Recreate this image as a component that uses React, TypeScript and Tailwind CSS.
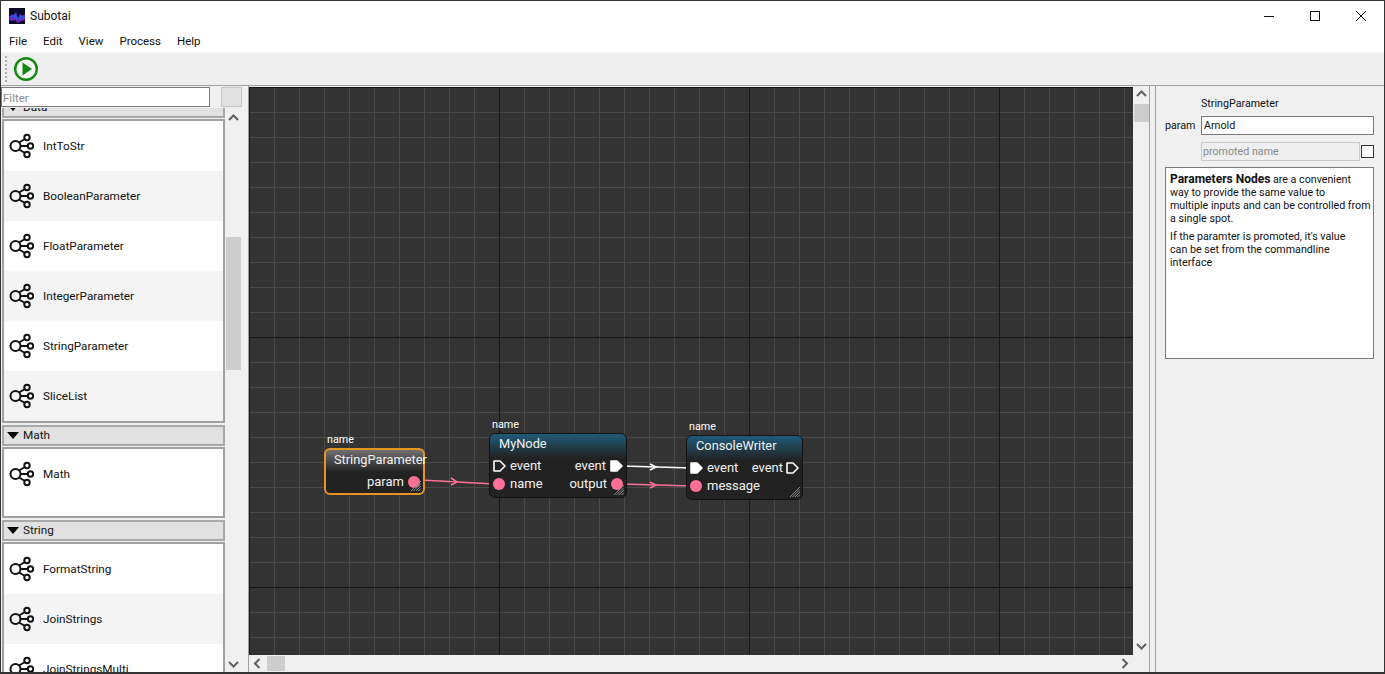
import React from "react";

/* node palette */
const dataRows = ["IntToStr", "BooleanParameter", "FloatParameter", "IntegerParameter", "StringParameter", "SliceList"];
const mathRows = ["Math"];
const stringRows = ["FormatString", "JoinStrings", "JoinStringsMulti"];

const NodeIcon = () => (
  <svg width="28" height="28" viewBox="0 0 28 28" fill="none" stroke="#111" strokeWidth="2" className="shrink-0">
    <circle cx="9.5" cy="14" r="5" />
    <circle cx="21" cy="5.5" r="2.7" />
    <circle cx="24.5" cy="14" r="2.7" />
    <circle cx="21" cy="22.5" r="2.7" />
    <path d="M13 10.5 L19 7 M14.5 14 H21.8 M13 17.5 L19 21" />
  </svg>
);

const Row = ({ label, shaded }: { label: string; shaded: boolean }) => (
  <div className={`flex h-[50px] shrink-0 items-center gap-[9px] pl-[2px] ${shaded ? "bg-[#f4f4f4]" : "bg-white"}`}>
    <NodeIcon />
    <span className="pt-[1px] text-[11.75px] text-[#111]">{label}</span>
  </div>
);

const Section = ({ title, rows, className }: { title: string; rows: string[]; className: string }) => (
  <div className="flex flex-col">
    <div className="flex h-[21px] items-center gap-[4px] border-2 border-[#a8a8a8] bg-[#e1e1e1] pl-[3px]">
      <span className="h-0 w-0 border-x-[6px] border-t-[7px] border-x-transparent border-t-black" />
      <span className="pt-[1px] text-[11.75px] text-[#111]">{title}</span>
    </div>
    <div className={`mt-[1px] flex flex-col overflow-hidden border-2 border-[#a0a0a0] bg-white ${className}`}>
      {rows.map((r, i) => (
        <Row key={r} label={r} shaded={i % 2 === 1} />
      ))}
    </div>
  </div>
);

/* node graph */
type PortKind = "event" | "value";

const PortMark = ({ kind, filled }: { kind: PortKind; filled?: boolean }) =>
  kind === "value" ? (
    <span className="h-[12px] w-[12px] shrink-0 rounded-full bg-[#ff7096]" />
  ) : (
    <svg width="13" height="12" viewBox="0 0 13 12" className="shrink-0">
      <path
        d="M1 1 H7 L12 6 L7 11 H1 Z"
        fill={filled ? "#fff" : "none"}
        stroke="#fff"
        strokeWidth="1.6"
        strokeLinejoin="round"
      />
    </svg>
  );

const Grip = () => (
  <svg width="10" height="10" viewBox="0 0 10 10" className="absolute bottom-[2px] right-[2px]" stroke="#8a8a8a" strokeWidth="1">
    <path d="M0 10 L10 0 M2.5 10 L10 2.5 M5 10 L10 5 M7.5 10 L10 7.5" />
  </svg>
);

const GraphNode = ({
  title,
  pos,
  header,
  titleClass,
  children
}: {
  title: string;
  pos: string;
  header: string;
  titleClass: string;
  children: React.ReactNode;
}) => (
  <div className={`absolute ${pos}`}>
    <span className="absolute -top-[15px] left-[3px] text-[10.75px] leading-[14px] text-white">name</span>
    <div className={`relative h-full rounded-[6px] text-[13px] leading-[18px] text-[#f2f2f2] ${header}`}>
      <div className={`whitespace-nowrap text-[12.8px] leading-[20px] ${titleClass}`}>{title}</div>
      {children}
      <Grip />
    </div>
  </div>
);

const Wires = () => (
  <svg width="884" height="568" className="absolute left-0 top-0" fill="none" strokeWidth="1.6">
    <g stroke="#ff7096">
      <path d="M172 393 L245 397" />
      <path d="M202 391 L208 395 L202 398" />
      <path d="M373 397 L443 399" />
      <path d="M401 395 L407 398 L401 401" />
    </g>
    <g stroke="#fff">
      <path d="M373 379 L443 381" />
      <path d="M401 377 L407 380 L401 383" />
    </g>
  </svg>
);

const ScrollArrow = ({ dir }: { dir: "up" | "down" | "left" | "right" }) => {
  const d = { up: "M1 7 L5.5 2.5 L10 7", down: "M1 3 L5.5 7.5 L10 3", left: "M7.5 1 L3 5.5 L7.5 10", right: "M3.5 1 L8 5.5 L3.5 10" }[dir];
  return (
    <svg width="11" height="11" viewBox="0 0 11 11" fill="none" stroke="#606060" strokeWidth="2">
      <path d={d} />
    </svg>
  );
};

const App = () => {
  return (
    <div className="flex h-[674px] w-[1385px] flex-col overflow-hidden border-x border-y-2 border-x-[#333] border-y-[#333] border-t-[1px] bg-[#f0f0f0] font-['Roboto',sans-serif] text-[12px] text-[#111]">
      {/* title bar */}
      <div className="flex h-[29px] shrink-0 items-center bg-white">
        <svg width="16" height="16" viewBox="0 0 16 16" className="ml-[8px] mr-[5px]">
          <rect width="16" height="16" fill="#0b0b2a" />
          <path d="M0 9 L3 6 L5 10 L7 3 L9 13 L11 5 L13 9 L16 6 L16 12 L12 13 L9 15 L6 12 L3 13 L0 12 Z" fill="#7a1fc0" />
          <path d="M0 9 L4 7 L7 5 L9 10 L12 7 L16 8 L16 10 L11 11 L8 12 L5 10 Z" fill="#2f4fe0" />
        </svg>
        <span>Subotai</span>
        <div className="ml-auto flex h-full">
          <div className="flex w-[46px] items-center justify-center">
            <svg width="10" height="10" stroke="#111" strokeWidth="1"><path d="M0 5.5 H10" /></svg>
          </div>
          <div className="flex w-[46px] items-center justify-center">
            <svg width="10" height="10" fill="none" stroke="#111" strokeWidth="1"><rect x="0.5" y="0.5" width="9" height="9" /></svg>
          </div>
          <div className="flex w-[46px] items-center justify-center">
            <svg width="10" height="10" stroke="#111" strokeWidth="1"><path d="M0 0 L10 10 M10 0 L0 10" /></svg>
          </div>
        </div>
      </div>
      {/* menu */}
      <div className="flex h-[23px] shrink-0 items-center gap-[16px] border-b border-[#f5f5f5] bg-white pl-[8px] pt-[2px] text-[11.5px]">
        <span>File</span>
        <span>Edit</span>
        <span>View</span>
        <span>Process</span>
        <span>Help</span>
      </div>
      {/* toolbar */}
      <div className="flex h-[33px] shrink-0 items-center border-b border-[#a0a0a0] bg-[#efefef] pl-[4px]">
        <div className="h-[26px] w-[2px] bg-[repeating-linear-gradient(to_bottom,#a8a8a8_0,#a8a8a8_2px,transparent_2px,transparent_4px)]" />
        <svg width="24" height="24" viewBox="0 0 24 24" className="ml-[7px]">
          <circle cx="12" cy="12" r="12" fill="#f7f7f7" />
          <circle cx="12" cy="12" r="10.8" fill="none" stroke="#128a12" strokeWidth="2.4" />
          <path d="M8.5 5.5 L18 12 L8.5 18.5 Z" fill="#128a12" />
        </svg>
      </div>

      <div className="flex min-h-0 flex-1">
        {/* palette */}
        <div className="flex w-[242px] shrink-0 flex-col">
          <div className="flex h-[22px] shrink-0 items-start pt-[1px]">
            <input
              readOnly
              placeholder="Filter"
              className="h-[20px] w-[209px] border border-[#7a7a7a] bg-white px-[1px] pt-[2px] text-[11.5px] leading-[14px] outline-none placeholder:text-[#8a8a8a]"
            />
            <div className="ml-[11px] h-[20px] w-[21px] border border-[#c4c4c4] bg-[#e1e1e1]" />
          </div>
          <div className="flex min-h-0 flex-1">
            <div className="w-[224px] shrink-0 overflow-hidden pl-[1px]">
              <div className="-mt-[11px] flex flex-col gap-[2px]">
                <Section title="Data" rows={dataRows} className="h-[304px]" />
                <Section title="Math" rows={mathRows} className="h-[71px]" />
                <Section title="String" rows={stringRows} className="h-[200px]" />
              </div>
            </div>
            <div className="flex w-[17px] shrink-0 flex-col items-center border-r border-transparent pt-[1px]">
              <div className="mt-[4px]"><ScrollArrow dir="up" /></div>
              <div className="mt-[113px] h-[133px] w-[15px] bg-[#cdcdcd]" />
              <div className="mb-[2px] mt-auto"><ScrollArrow dir="down" /></div>
            </div>
          </div>
        </div>

        {/* canvas */}
        <div className="ml-[5px] flex w-[902px] shrink-0 flex-col border-x border-[#a0a0a0]">
          <div className="flex min-h-0 flex-1 pt-[1px]">
            <div className="relative w-[884px] shrink-0 overflow-hidden bg-[#333333] bg-[image:linear-gradient(to_right,#161616_1px,transparent_1px),linear-gradient(to_bottom,#161616_1px,transparent_1px),linear-gradient(to_right,#494949_1px,transparent_1px),linear-gradient(to_bottom,#494949_1px,transparent_1px)] bg-[size:250px_250px,250px_250px,25px_25px,25px_25px]">
              <Wires />
              <GraphNode
                title="StringParameter"
                titleClass="pl-[8px]"
                pos="left-[75px] top-[361px] h-[47px] w-[101px]"
                header="border-2 border-[#e3951f] bg-[linear-gradient(to_bottom,#707070_0,#222_22px,#222_100%)]"
              >
                <div className="mt-[3px] flex items-center justify-end gap-[4px] pr-[3px]">
                  <span>param</span>
                  <PortMark kind="value" />
                </div>
              </GraphNode>
              <GraphNode
                title="MyNode"
                titleClass="pl-[9px]"
                pos="left-[240px] top-[346px] h-[65px] w-[138px]"
                header="border border-[#111] bg-[linear-gradient(to_bottom,#1f5b7a_0,#222_24px,#222_100%)]"
              >
                <div className="flex flex-col pt-[3px]">
                  <div className="flex items-center justify-between px-[3px]">
                    <div className="flex items-center gap-[4px]"><PortMark kind="event" /><span>event</span></div>
                    <div className="flex items-center gap-[4px]"><span>event</span><PortMark kind="event" filled /></div>
                  </div>
                  <div className="flex items-center justify-between px-[3px]">
                    <div className="flex items-center gap-[4px]"><PortMark kind="value" /><span className="pl-[1px]">name</span></div>
                    <div className="flex items-center gap-[4px]"><span>output</span><PortMark kind="value" /></div>
                  </div>
                </div>
              </GraphNode>
              <GraphNode
                title="ConsoleWriter"
                titleClass="pl-[9px]"
                pos="left-[437px] top-[348px] h-[65px] w-[117px]"
                header="border border-[#111] bg-[linear-gradient(to_bottom,#1f5b7a_0,#222_24px,#222_100%)]"
              >
                <div className="flex flex-col pt-[3px]">
                  <div className="flex items-center justify-between px-[3px]">
                    <div className="flex items-center gap-[4px]"><PortMark kind="event" filled /><span>event</span></div>
                    <div className="flex items-center gap-[3px]"><span>event</span><PortMark kind="event" /></div>
                  </div>
                  <div className="flex items-center px-[3px]">
                    <div className="flex items-center gap-[4px]"><PortMark kind="value" /><span className="pl-[1px]">message</span></div>
                  </div>
                </div>
              </GraphNode>
            </div>
            <div className="flex w-[16px] shrink-0 flex-col items-center">
              <div className="mt-[2px]"><ScrollArrow dir="up" /></div>
              <div className="mt-[4px] h-[18px] w-[15px] bg-[#cdcdcd]" />
              <div className="mb-[3px] mt-auto"><ScrollArrow dir="down" /></div>
            </div>
          </div>
          <div className="flex h-[17px] shrink-0 items-center pl-[3px] pr-[19px]">
            <ScrollArrow dir="left" />
            <div className="ml-[4px] h-[15px] w-[18px] bg-[#cdcdcd]" />
            <div className="ml-auto"><ScrollArrow dir="right" /></div>
          </div>
        </div>

        {/* inspector */}
        <div className="ml-[5px] flex min-w-0 flex-1 flex-col border-l border-[#a0a0a0] pl-[9px] pr-[10px] text-[10.7px]">
          <div className="ml-[36px] mt-[10px] leading-[16px]">StringParameter</div>
          <div className="mt-[4px] flex h-[19px] items-center">
            <span className="w-[36px] pt-[2px]">param</span>
            <div className="flex h-full flex-1 items-center border border-[#7a7a7a] bg-white px-[2px] pt-[2px]">Arnold</div>
          </div>
          <div className="mt-[7px] flex h-[19px] items-center pl-[36px]">
            <div className="flex h-full w-[159px] items-center border border-[#c8c8c8] bg-[#efefef] px-[1px] pt-[2px] text-[#8a8a8a]">promoted name</div>
            <div className="ml-[1px] h-[13px] w-[13px] border border-[#333] bg-white" />
          </div>
          <div className="mt-[6px] h-[192px] whitespace-nowrap border border-[#7a7a7a] bg-white px-[4px] pt-[5px] leading-[13px]">
            <p>
              <b className="text-[12px]">Parameters Nodes</b> are a convenient
              <br />
              way to provide the same value to
              <br />
              multiple inputs and can be controlled from
              <br />
              a single spot.
            </p>
            <p className="mt-[5px]">
              If the paramter is promoted, it's value
              <br />
              can be set from the commandline
              <br />
              interface
            </p>
          </div>
        </div>
      </div>
    </div>
  );
};

export default App;
